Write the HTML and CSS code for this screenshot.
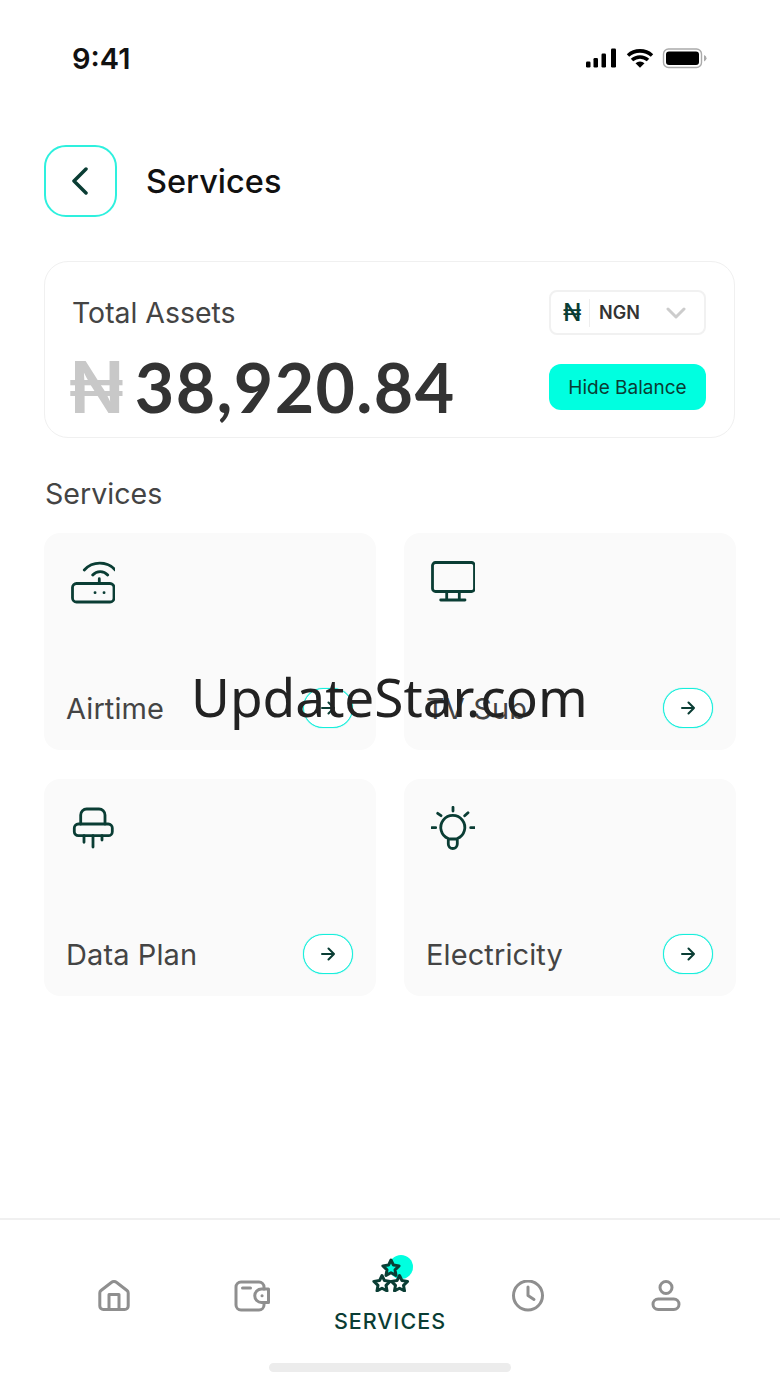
FILE: index.html
```html
<!DOCTYPE html>
<html lang="en">
<head>
    <meta charset="UTF-8">
    <meta name="viewport" content="width=device-width, initial-scale=1.0">
    <title>Services</title>
    <link rel="stylesheet" href="styles.css">
</head>
<body>
    <div class="phone">
        <div class="status-bar">
            <span class="time">9:41</span>
            <div class="status-icons">
                <svg width="122" height="22" viewBox="585 47 122 22">
                    <rect x="586" y="61.5" width="4.5" height="6" rx="1.2" fill="#000"/>
                    <rect x="593.5" y="58" width="4.5" height="9.5" rx="1.2" fill="#000"/>
                    <rect x="601.5" y="53.5" width="4.5" height="14" rx="1.2" fill="#000"/>
                    <rect x="611" y="48.5" width="5" height="19" rx="1.2" fill="#000"/>
                    <path d="M628 55.5a18 18 0 0 1 24 0M632 60a12 12 0 0 1 16 0" fill="none" stroke="#000" stroke-width="3.6"/>
                    <path d="M635.5 63.2a7 7 0 0 1 9 0L640 67.8z" fill="#000"/>
                    <rect x="663.5" y="49" width="38" height="18.5" rx="5" fill="none" stroke="#aaa" stroke-width="1.4"/>
                    <rect x="666" y="51.5" width="33" height="13.5" rx="3" fill="#000"/>
                    <path d="M704 55v6.5a3.5 3.5 0 0 0 2.5-3.2 3.5 3.5 0 0 0-2.5-3.3z" fill="#aaa"/>
                </svg>
            </div>
        </div>

        <header class="page-header">
            <button class="back-btn">
                <svg width="18" height="28" viewBox="0 0 18 28"><path d="M15 2 3 14l12 12" fill="none" stroke="#0a3d34" stroke-width="3.5" stroke-linecap="round" stroke-linejoin="round"/></svg>
            </button>
            <h1>Services</h1>
        </header>

        <section class="assets-card">
            <div class="assets-row">
                <span class="assets-label">Total Assets</span>
                <div class="currency-select">
                    <span class="currency-sign">₦</span>
                    <span class="currency-code">NGN</span>
                    <svg class="currency-arrow" width="20" height="12" viewBox="0 0 20 12"><path d="m2 2 8 8 8-8" fill="none" stroke="#ccc" stroke-width="3" stroke-linecap="round" stroke-linejoin="round"/></svg>
                </div>
            </div>
            <div class="assets-row balance-row">
                <div class="balance"><span class="balance-sign">₦</span>38,920.84</div>
                <button class="hide-btn">Hide Balance</button>
            </div>
        </section>

        <h2 class="section-title">Services</h2>

        <div class="service-grid">
            <div class="service-card">
                <svg class="service-icon" width="44" height="44" viewBox="0 0 44 44">
                    <rect x="1.5" y="23.5" width="41.5" height="18.5" rx="4"/>
                    <path d="M28.3 18.7v4.8M21.7 15a10 10 0 0 1 15 0M13.3 10a21 21 0 0 1 31 0"/>
                    <path d="M24 32.7h.1M33 32.7h.1"/>
                </svg>
                <div class="service-foot">
                    <span class="service-name">Airtime</span>
                    <button class="go-btn"><svg width="14" height="14" viewBox="0 0 14 14"><path d="M1 7h12M7.500 1.500 13 7l-5.500 5.500"/></svg></button>
                </div>
            </div>
            <div class="service-card">
                <svg class="service-icon" width="44" height="44" viewBox="0 0 44 44">
                    <rect x="1.500" y="2.500" width="42" height="29" rx="3"/>
                    <path d="M15.700 31.500V40M28.300 31.500V40M9.700 40H34"/>
                </svg>
                <div class="service-foot">
                    <span class="service-name">TV Sub</span>
                    <button class="go-btn"><svg width="14" height="14" viewBox="0 0 14 14"><path d="M1 7h12M7.500 1.500 13 7l-5.500 5.500"/></svg></button>
                </div>
            </div>
            <div class="service-card">
                <svg class="service-icon" width="44" height="44" viewBox="0 0 44 44">
                    <rect x="3.300" y="18" width="38" height="11.700" rx="4"/>
                    <path d="M9.700 18V9a6 6 0 0 1 6-6H28a6 6 0 0 1 6 6v9M13 29.700v6.600M22 29.700V41M31 29.700V34"/>
                </svg>
                <div class="service-foot">
                    <span class="service-name">Data Plan</span>
                    <button class="go-btn"><svg width="14" height="14" viewBox="0 0 14 14"><path d="M1 7h12M7.500 1.500 13 7l-5.500 5.500"/></svg></button>
                </div>
            </div>
            <div class="service-card">
                <svg class="service-icon" width="44" height="44" viewBox="0 0 44 44">
                    <path d="M17.300 32.500a12 12 0 1 1 9 0V38a4.500 4.500 0 0 1-9 0zM17.300 33h9"/>
                    <path d="M22 1.300V5M.7 21.700h4M39.700 21.700h4M6.700 7.300 10 9.700M37 6.700l-3.300 3"/>
                </svg>
                <div class="service-foot">
                    <span class="service-name">Electricity</span>
                    <button class="go-btn"><svg width="14" height="14" viewBox="0 0 14 14"><path d="M1 7h12M7.500 1.500 13 7l-5.500 5.500"/></svg></button>
                </div>
            </div>
        </div>

        <nav class="tab-bar">
            <div class="tab">
                <svg class="tab-icon" width="32" height="32" viewBox="0 0 32 32"><path d="M3 10.500 13 2.700a5 5 0 0 1 6 0l10 7.800a3 3 0 0 1 1.200 2.400V26a3.500 3.500 0 0 1-3.500 3.500H5.300A3.500 3.500 0 0 1 1.800 26V12.900a3 3 0 0 1 1.200-2.400zM11 29.500V14.500h10v15"/></svg>
            </div>
            <div class="tab">
                <svg class="tab-icon" width="36" height="32" viewBox="0 0 36 32"><path d="M30 9V7a5 5 0 0 0-5-5H7a5 5 0 0 0-5 5v18a5 5 0 0 0 5 5h18a5 5 0 0 0 5-5v-2.500"/><path d="M8.500 8h8"/><path d="M27.500 9h7v13.500h-7a6.750 6.750 0 0 1 0-13.500z"/><path d="M28 15.800h.1"/></svg>
            </div>
            <div class="tab tab-active">
                <span class="tab-dot"></span>
                <svg class="stars" width="40" height="36" viewBox="0 0 40 36">
                    <g transform="translate(12 28)"><polygon points="0,-8.500 2.470,-3.400 8.080,-2.630 4,1.300 5,6.880 0,4.200 -5,6.880 -4,1.300 -8.080,-2.630 -2.470,-3.400"/></g>
                    <g transform="translate(29.500 28)"><polygon points="0,-8.500 2.470,-3.400 8.080,-2.630 4,1.300 5,6.880 0,4.200 -5,6.880 -4,1.300 -8.080,-2.630 -2.470,-3.400"/></g>
                    <g transform="translate(21 12.500)"><polygon class="star-top" points="0,-8.500 2.470,-3.400 8.080,-2.630 4,1.300 5,6.880 0,4.200 -5,6.880 -4,1.300 -8.080,-2.630 -2.470,-3.400"/></g>
                </svg>
                <span class="tab-label">SERVICES</span>
            </div>
            <div class="tab">
                <svg class="tab-icon" width="32" height="32" viewBox="0 0 32 32"><circle cx="16" cy="15.500" r="14.500"/><path d="M16 7v8.500l6 4"/></svg>
            </div>
            <div class="tab">
                <svg class="tab-icon" width="30" height="32" viewBox="0 0 30 32"><circle cx="15" cy="7.500" r="6"/><rect x="2" y="19" width="26" height="10.500" rx="5.250"/></svg>
            </div>
        </nav>
        <div class="home-bar"></div>

        <div class="watermark">UpdateStar.com</div>
    </div>
</body>
</html>
```

FILE: styles.css
```css
* {
    box-sizing: border-box;
}
body {
    margin: 0;
    background-color: #fff;
    font-family: Inter, "Liberation Sans", sans-serif;
    color: #333;
}
button {
    font-family: inherit;
    padding: 0;
    cursor: pointer;
}
.phone {
    position: relative;
    width: 780px;
    height: 1387px;
    overflow: hidden;
    display: flex;
    flex-direction: column;
}
.status-bar {
    display: flex;
    justify-content: space-between;
    align-items: center;
    height: 36px;
    margin-top: 40px;
    padding: 0 73px 0 72px;
}
.time {
    font-size: 29px;
    font-weight: 600;
    color: #111;
}
.status-icons {
    display: flex;
}
.page-header {
    display: flex;
    align-items: center;
    gap: 29px;
    margin-top: 69px;
    padding-left: 44px;
}
.page-header h1 {
    margin: 0;
    font-size: 32.5px;
    font-weight: 500;
    color: #111;
}
.back-btn {
    width: 73px;
    height: 72px;
    display: flex;
    align-items: center;
    justify-content: center;
    padding-right: 2px;
    background: #fff;
    border: 2px solid #2ef0de;
    border-radius: 22px;
}
.assets-card {
    margin: 44px 44px 0;
    width: 691px;
    height: 177px;
    padding: 28px 28px 0 27px;
    border: 1px solid #f0f0f0;
    border-radius: 24px;
}
.assets-row {
    display: flex;
    justify-content: space-between;
    align-items: center;
}
.balance-row {
    height: 60px;
    margin-top: 22px;
}
.assets-label {
    font-size: 28.4px;
    color: #444;
}
.currency-select {
    width: 157px;
    height: 45px;
    display: flex;
    align-items: center;
    padding-left: 12px;
    border: 2px solid #f1f1f1;
    border-radius: 8px;
}
.currency-sign {
    width: 27px;
    padding-right: 8px;
    border-right: 1px solid #eee;
    font-size: 24px;
    line-height: 28px;
    font-weight: 500;
    color: #0a3d34;
}
.currency-code {
    margin-left: 9px;
    font-size: 18px;
    font-weight: 600;
    color: #333;
}
.currency-arrow {
    margin-left: 26px;
}
.balance {
    font-family: Lato, Inter, sans-serif;
    font-size: 68px;
    line-height: 60px;
    font-weight: 700;
    letter-spacing: 1.4px;
    color: #333;
    margin-left: -3px;
}
.balance-sign {
    margin-right: 11px;
    font-family: Inter, sans-serif;
    font-size: 72px;
    font-weight: 600;
    letter-spacing: 0;
    color: #c8c8c8;
}
.hide-btn {
    width: 157px;
    height: 46px;
    background-color: #00ffe0;
    border: none;
    border-radius: 12px;
    font-size: 19px;
    color: #0a3d34;
}
.section-title {
    margin: 38px 0 0 45px;
    font-size: 28.6px;
    font-weight: 400;
    color: #444;
}
.service-grid {
    display: grid;
    grid-template-columns: 332px 332px;
    grid-auto-rows: 217px;
    gap: 29px 28px;
    margin: 22px 44px 0;
}
.service-card {
    display: flex;
    flex-direction: column;
    justify-content: space-between;
    padding: 27px 23px 22px 22px;
    background-color: #fafafa;
    border-radius: 16px;
}
.service-icon {
    margin-left: 5px;
    fill: none;
    stroke: #0a3d34;
    stroke-width: 2.8;
    stroke-linecap: round;
    stroke-linejoin: round;
}
.service-foot {
    display: flex;
    justify-content: space-between;
    align-items: center;
}
.service-name {
    font-size: 29px;
    letter-spacing: 0.1px;
    color: #444;
}
.go-btn {
    width: 50px;
    height: 40px;
    display: flex;
    align-items: center;
    justify-content: center;
    background: #fff;
    border: 1px solid #14efdc;
    border-radius: 20px;
    box-shadow: 0 0 1px #14efdc;
}
.go-btn path {
    fill: none;
    stroke: #0a3d34;
    stroke-width: 2;
    stroke-linecap: round;
    stroke-linejoin: round;
}
.tab-bar {
    display: grid;
    grid-template-columns: repeat(5, 138px);
    justify-content: center;
    height: 145px;
    margin-top: auto;
    padding-top: 60px;
    border-top: 2px solid #f0f0f0;
}
.tab {
    position: relative;
    display: flex;
    flex-direction: column;
    align-items: center;
}
.tab-icon {
    fill: none;
    stroke: #8f8f8f;
    stroke-width: 3;
    stroke-linecap: round;
    stroke-linejoin: round;
}
.tab-active {
    margin-top: -24px;
}
.tab-dot {
    position: absolute;
    top: -1px;
    left: 68px;
    width: 24px;
    height: 24px;
    border-radius: 50%;
    background-color: #00ffe0;
}
.stars {
    position: relative;
    fill: #fff;
    stroke: #0a3d34;
    stroke-width: 3;
    stroke-linejoin: round;
}
.stars .star-top {
    fill: #00ffe0;
}
.tab-label {
    margin-top: 16px;
    font-size: 21.5px;
    font-weight: 500;
    letter-spacing: 1px;
    color: #0a3d34;
}
.home-bar {
    width: 242px;
    height: 9px;
    margin: 0 auto 15px;
    border-radius: 5px;
    background-color: #ececec;
}
.watermark {
    position: absolute;
    left: 191px;
    top: 660px;
    font-family: "Noto Sans", sans-serif;
    font-size: 53.2px;
    color: #222;
    white-space: nowrap;
}
```
